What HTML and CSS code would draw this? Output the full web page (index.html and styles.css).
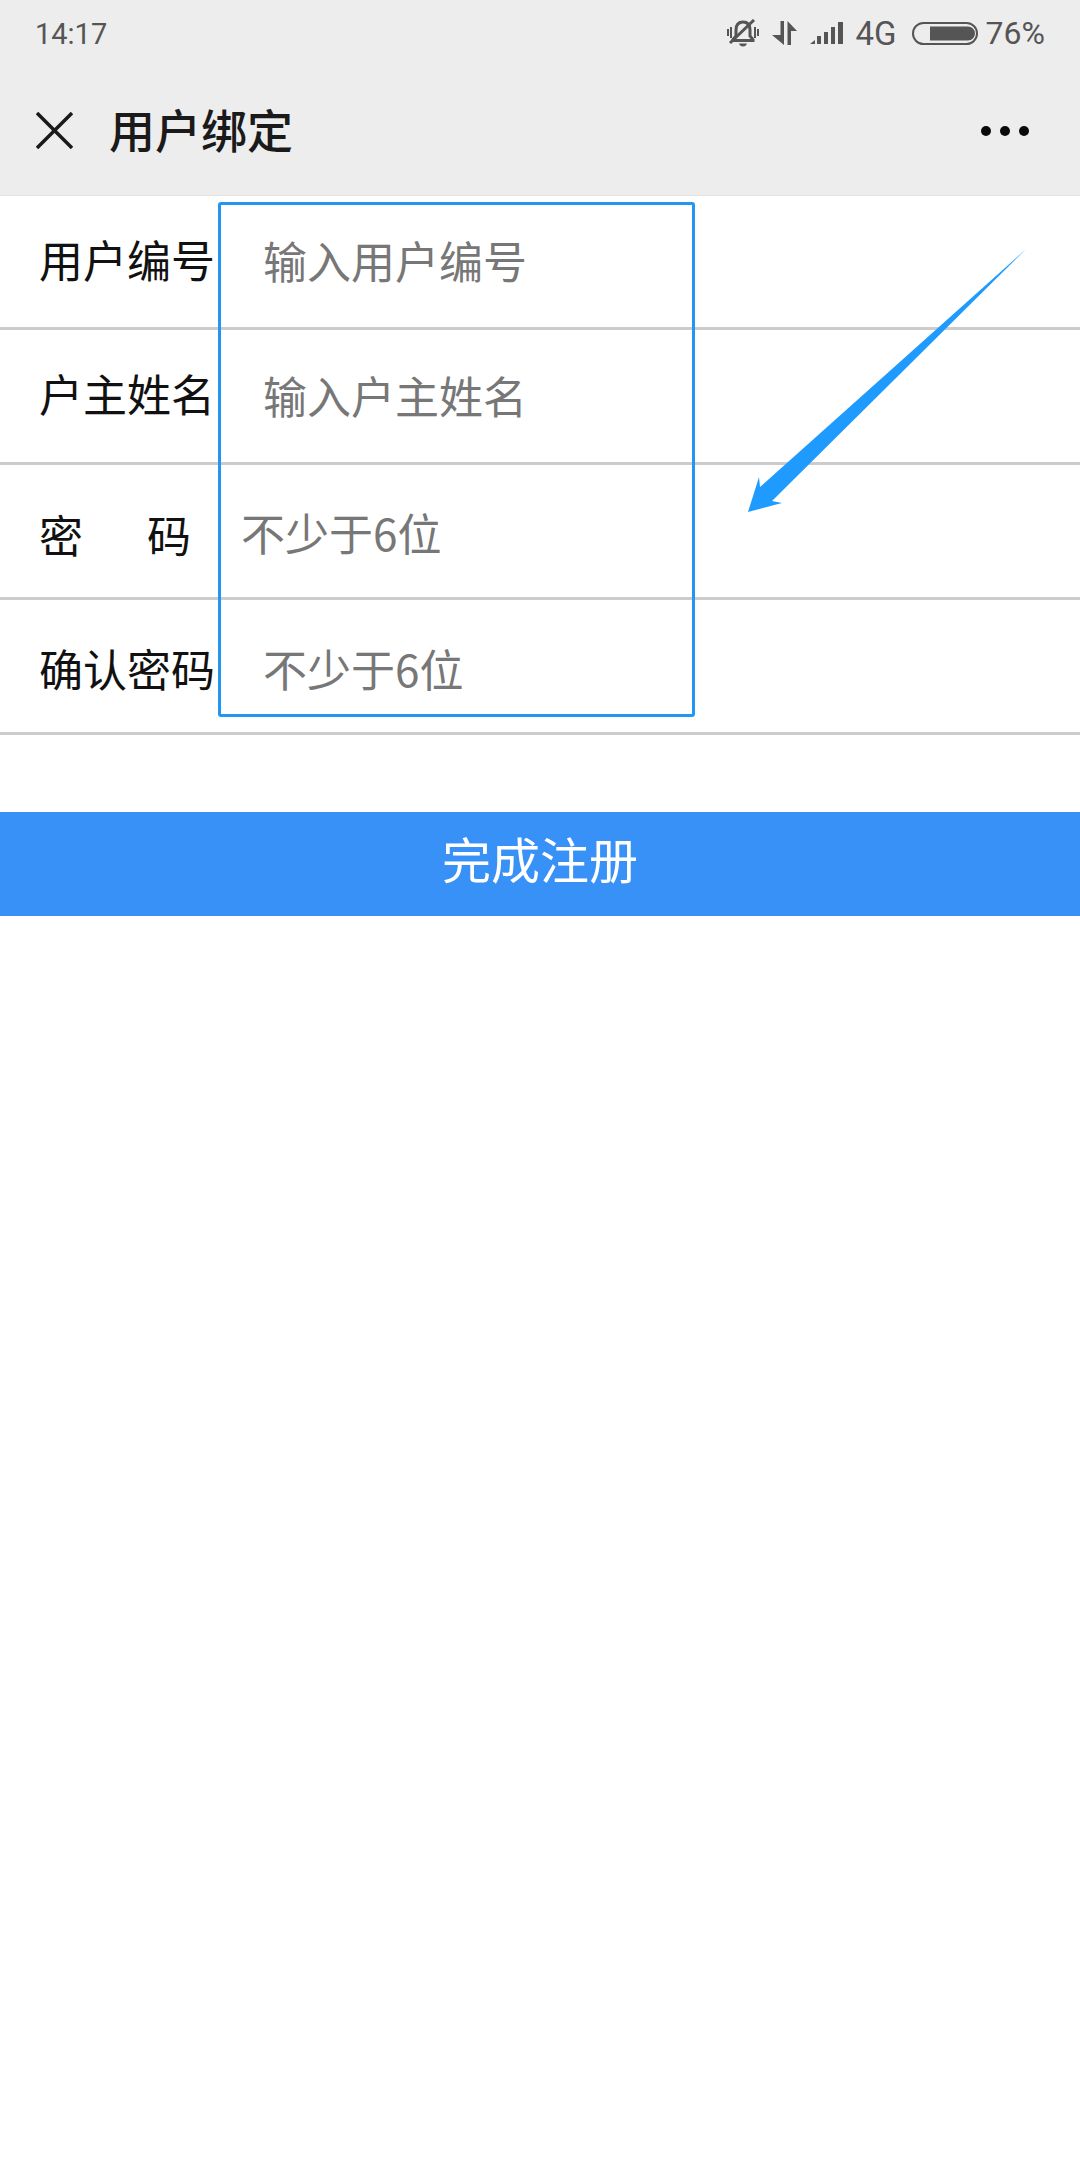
FILE: index.html
```html
<!DOCTYPE html>
<html lang="zh-CN">
<head>
  <meta charset="UTF-8">
  <meta name="viewport" content="width=device-width, initial-scale=1.0">
  <title>用户绑定</title>
  <link rel="stylesheet" href="styles.css">
</head>
<body>

<div class="top">
  <div class="status">
    <span class="time">14:17</span>
    <div class="status-right">
      <svg class="ic-bell" width="32" height="28" viewBox="0 0 32 28">
        <path d="M16 3c-5 0-7 3.500-7 8v6l-3 3.500v1h20v-1l-3-3.500v-6c0-4.500-2-8-7-8z" fill="none" stroke="#555" stroke-width="3"/>
        <path d="M12 24.500h8c-.5 2-2 3-4 3s-3.500-1-4-3z" fill="#555"/>
        <path d="M1 10v7M4 8v11M28 8v11M31 10v7" stroke="#555" stroke-width="2" fill="none"/>
        <path d="M3 24L27 1" stroke="#555" stroke-width="3"/>
      </svg>
      <svg class="ic-data" width="25" height="24" viewBox="0 0 25 24">
        <path d="M8.500 0h3.500v24L0 14h8.500z" fill="#555"/>
        <path d="M15.500 24V0L25 10h-6v14z" fill="#555"/>
      </svg>
      <svg class="ic-signal" width="34" height="22" viewBox="0 0 34 22">
        <path d="M0 22l5-4v4zM7 22v-8h4v8zM14 22V10h4v12zM21 22V5h4v17zM28 22V0h5v22z" fill="#555"/>
      </svg>
      <span class="net">4G</span>
      <svg class="ic-battery" width="66" height="23" viewBox="0 0 66 23">
        <rect x="1" y="1" width="64" height="21" rx="10.500" fill="none" stroke="#555" stroke-width="2"/>
        <path d="M18 4.500h38a7 7 0 0 1 0 14H18z" fill="#555"/>
      </svg>
      <span class="pct">76%</span>
    </div>
  </div>
  <div class="nav">
    <svg class="ic-close" width="37" height="37" viewBox="0 0 37 37">
      <path d="M1 1l35 35M36 1L1 36" stroke="#1a1a1a" stroke-width="3.500" fill="none"/>
    </svg>
    <span class="nav-title">用户绑定</span>
    <div class="dots"><i></i><i></i><i></i></div>
  </div>
</div>

<div class="form">
  <div class="row">
    <label>用户编号</label>
    <input class="field" placeholder="输入用户编号">
  </div>
  <div class="row">
    <label>户主姓名</label>
    <input class="field" placeholder="输入户主姓名">
  </div>
  <div class="row row-pwd">
    <label class="spread"><span>密</span><span>码</span></label>
    <input class="field short" placeholder="不少于6位">
  </div>
  <div class="row row-confirm">
    <label>确认密码</label>
    <input class="field" placeholder="不少于6位">
  </div>

  <!-- annotation drawn on top of the form -->
  <div class="mark-box"></div>
  <svg class="mark-arrow" width="300" height="280" viewBox="0 0 300 280">
    <path d="M291 3L37 255 L47 257 L13 266 L24 231 L25 241z" fill="#1f9bff"/>
  </svg>
</div>

<button class="submit">完成注册</button>

</body>
</html>
```

FILE: styles.css
```css
body {
  margin: 0;
  background: #fff;
  font-family: "Noto Sans CJK SC", "Noto Sans", sans-serif;
}
.top {
  background: #ededed;
  height: 196px;
  box-sizing: border-box;
  border-bottom: 1px solid #e4e4e4;
}
.status {
  height: 66px;
  padding: 0 35px 0 35px;
  display: flex;
  align-items: center;
  justify-content: space-between;
  color: #555;
  font-family: Roboto, sans-serif;
  font-size: 31px;
}
.time {
  font-size: 29px;
  padding-top: 2px;
}
.net {
  font-size: 33px;
}
.pct {
  font-size: 32px;
}
.status-right {
  display: flex;
  align-items: center;
}
.ic-bell {
  margin-right: 13px;
}
.ic-data {
  margin-right: 13px;
}
.ic-signal {
  margin-right: 12px;
}
.ic-battery {
  margin: 0 8px 0 15px;
}
.nav {
  height: 129px;
  padding: 0 51px 0 36px;
  display: flex;
  align-items: center;
}
.ic-close {
  margin-right: 36px;
}
.nav-title {
  flex: 1;
  padding-bottom: 5px;
  font-size: 46px;
  font-weight: 500;
  color: #1a1a1a;
}
.dots {
  display: flex;
  gap: 9px;
}
.dots i {
  width: 10px;
  height: 10px;
  border-radius: 50%;
  background: #0a0a0a;
}
.form {
  position: relative;
}
.row {
  height: 135px;
  box-sizing: border-box;
  border-bottom: 3px solid #ccc;
  padding: 0 0 6px 39px;
  display: flex;
  align-items: center;
  font-size: 44px;
  color: #111;
}
.row:first-child {
  height: 134px;
}
.row-pwd {
  padding: 5px 0 0 39px;
}
.row-confirm {
  padding: 4px 0 0 39px;
}
.row label {
  width: 177px;
  flex: none;
}
.row label.spread {
  display: flex;
  justify-content: space-between;
  width: 152px;
  margin-right: 25px;
}
.field {
  border: none;
  outline: none;
  background: transparent;
  font: inherit;
  margin: 3px 0 0 47px;
  padding: 0;
  width: 400px;
}
.field.short {
  margin: 0 0 3px 25px;
}
.row-confirm .field {
  margin-top: 0;
}
.field::placeholder {
  color: #777;
  opacity: 1;
}
.mark-box {
  position: absolute;
  left: 218px;
  top: 6px;
  width: 477px;
  height: 515px;
  box-sizing: border-box;
  border: 3px solid #2196f3;
  border-radius: 3px;
}
.mark-arrow {
  position: absolute;
  left: 735px;
  top: 50px;
}
.submit {
  display: block;
  width: 100%;
  height: 104px;
  margin-top: 77px;
  border: none;
  padding: 0 0 14px;
  background: #3891f6;
  color: #fff;
  font: inherit;
  font-size: 49px;
}
```
